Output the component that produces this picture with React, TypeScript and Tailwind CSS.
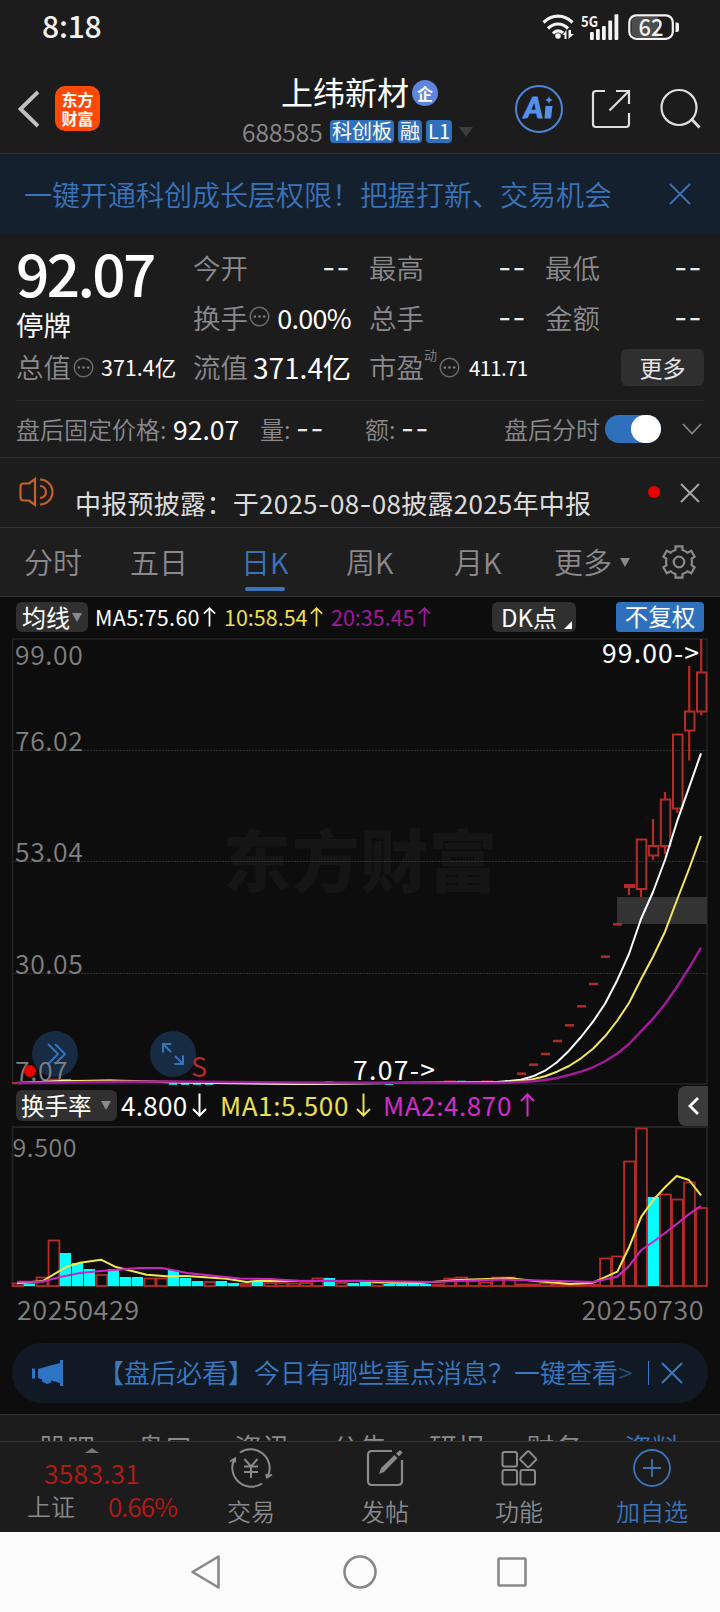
import React from 'react';
import clsx from 'clsx';

const RED = '#b32c27';
const CYAN = '#00ffff';

// Moving averages, newest value first, one value per 12px
const ma5 = [753.3, 787.7, 821.7, 860, 892, 919, 954, 980.7, 1003.7, 1021.7, 1037, 1050.7, 1062.3, 1070.7, 1076.3, 1079.7, 1081, 1082];
const ma10 = [836, 869, 900, 931.7, 956.7, 979.3, 1003, 1021, 1036.3, 1048.7, 1058.3, 1066, 1071.7, 1076.3, 1079.3, 1081, 1081.7, 1082.3];
const ma20 = [947.7, 968, 986.7, 1004, 1018.7, 1031.3, 1044, 1053.7, 1061.3, 1067.3, 1071.7, 1075, 1078, 1080, 1081.3, 1082, 1082.6, 1083];

const toPoints = (values: number[]) => values.map((y, i) => `${701 - i * 12},${y}`).join(' ');

// x, wick top, body top, body bottom, wick bottom
const candles = [
  [701.5, 639, 672.5, 711.5, 715.5],
  [689.5, 666, 711.5, 730.5, 760.5],
  [677.5, 734, 734.5, 808.5, 813],
  [665.3, 792, 799.5, 846, 854],
  [653.3, 819, 846, 855.5, 860],
  [641.3, 839, 839.5, 889, 897],
];

const limitUps = [924.3, 956.7, 984, 1006.3, 1025.3, 1041, 1054, 1064.7, 1073.7];

// top of every turnover bar; "c" marks a falling day
const volumes: [number, string?][] = [
  [1283.5], [1283.5, 'c'], [1277.5], [1240.5], [1253, 'c'], [1263, 'c'], [1269, 'c'], [1275], [1269, 'c'], [1277, 'c'],
  [1277, 'c'], [1278.5], [1278.5], [1270, 'c'], [1278, 'c'], [1281, 'c'], [1282], [1281, 'c'], [1283, 'c'], [1284],
  [1281.5, 'c'], [1283], [1283], [1283.5], [1283], [1278.5], [1278, 'c'], [1283], [1283, 'c'], [1281.5, 'c'],
  [1283], [1284, 'c'], [1284, 'c'], [1283.5, 'c'], [1284, 'c'], [1285], [1278.5], [1277.5], [1281], [1282.5],
  [1277.5], [1277.5], [1284.5], [1284.5], [1283.5], [1284], [1285], [1285], [1285], [1258.5],
  [1256.5], [1161.5], [1128.5], [1197, 'c'], [1194.5], [1199.5], [1182.5], [1208],
];

const Close: React.FC<{ size: number; color: string; width?: number }> = ({ size, color, width = 2 }) => (
  <svg width={size} height={size} viewBox={`0 0 ${size} ${size}`}>
    <path d={`M1 1 ${size - 1} ${size - 1}M${size - 1} 1 1 ${size - 1}`} stroke={color} strokeWidth={width} />
  </svg>
);

const Dots = () => (
  <svg width="21" height="21" viewBox="0 0 21 21" className="shrink-0">
    <circle cx="10.5" cy="10.5" r="9.3" fill="none" stroke="#6a6a6c" strokeWidth="1.5" />
    <g fill="#7d7d80">
      <circle cx="5.8" cy="10.5" r="1.3" />
      <circle cx="10.5" cy="10.5" r="1.3" />
      <circle cx="15.2" cy="10.5" r="1.3" />
    </g>
  </svg>
);

const Dash = () => <span className="font-['Inter'] text-[28px] font-normal tracking-[1.500px] text-[#e8e8e8]">--</span>;

const Arrow: React.FC<{ down?: boolean; small?: boolean }> = ({ down, small }) => (
  <svg width={small ? 13 : 15} height={small ? 20 : 24} viewBox="0 0 15 24" preserveAspectRatio="none" className={clsx('shrink-0', down && 'rotate-180')}>
    <path d="M7.5 23.5V1.5M1 8l6.500-6.500L14 8" fill="none" stroke="currentColor" strokeWidth="2" />
  </svg>
);

const Cell: React.FC<{ label: string; children: React.ReactNode }> = ({ label, children }) => (
  <div className="flex h-[50px] w-[158px] items-center justify-between text-[27.500px] text-[#8a8a8d]">
    <span className="font-[350]">{label}</span>
    {children}
  </div>
);

const StatusBar = () => (
  <div className="flex h-[60px] items-start pl-[42px] pt-[3px]">
    <span className="w-[499px] text-[30px] font-medium leading-[44px] tracking-[-0.200px] text-[#f2f2f2]">8:18</span>
    <svg width="140" height="30" viewBox="541 12 140 30" className="mt-[9px]">
      <g fill="none" stroke="#f2f2f2" strokeWidth="3.2">
        <path d="M543.500 22.500C552 14 564 14 572.500 22.500" />
        <path d="M548 28.500c6-6 14-6 20 0" />
        <path d="M553 33.500c3-3.500 7-3.500 10-.500" />
      </g>
      <circle cx="558" cy="36" r="2.800" fill="#f2f2f2" />
      <path d="M562.500 35 566.500 30v9h-2v-4zM568.500 30v9l5.500-5h-3v-4z" fill="#f2f2f2" />
      <text x="581" y="26.500" fontSize="15" fontWeight="700" fill="#f2f2f2" textLength="17" lengthAdjust="spacingAndGlyphs">5G</text>
      <g fill="#f2f2f2">
        <rect x="590" y="32" width="3.800" height="8" rx="1" />
        <rect x="596" y="29" width="3.800" height="11" rx="1" />
        <rect x="602" y="26" width="3.800" height="14" rx="1" />
        <rect x="608.300" y="20.500" width="3.800" height="19.500" rx="1" />
        <rect x="614.500" y="14.300" width="3.800" height="25.700" rx="1" />
      </g>
      <path d="M636 17h22v20h-22q-4.500 0-4.500-4.500v-11Q631.500 17 636 17z" fill="#4d4d4d" />
      <rect x="629.300" y="15.300" width="43.500" height="23.500" rx="7" fill="none" stroke="#f2f2f2" strokeWidth="2.200" />
      <path d="M675.500 22.500h1.500q2 0 2 2v5.500q0 2-2 2h-1.500z" fill="#f2f2f2" />
      <text x="638.500" y="35.500" fontSize="23.500" fontWeight="500" fill="#f2f2f2" textLength="25" lengthAdjust="spacingAndGlyphs">62</text>
    </svg>
  </div>
);

const Header = () => (
  <div className="flex h-[94px] border-b border-[#333] pt-[11px]">
    <svg width="21" height="38" viewBox="0 0 21 38" className="ml-[18px] mt-[19px]">
      <path d="M20 2 2.500 19 20 36" fill="none" stroke="#c0c0c0" strokeWidth="4" />
    </svg>
    <div className="ml-4 mt-[15px] grid h-[45px] w-[45px] content-center rounded-[10px] bg-[#ff4a06] text-center text-[16px] font-bold leading-[19px] text-white">
      <span>东方</span>
      <span>财富</span>
    </div>
    <div className="ml-[135px] w-[250px]">
      <div className="flex h-[40px] items-center pl-[46px]">
        <span className="text-[32px] leading-[40px] text-white">上纬新材</span>
        <span className="ml-[3px] mt-[4px] grid h-[26px] w-[26px] place-items-center rounded-full bg-[#5f85df] text-[16px] font-bold leading-none text-white">企</span>
      </div>
      <div className="mt-[9px] flex h-[23px] items-center text-[20px] leading-[22px] text-white">
        <span className="w-[95px] pl-[7px] text-[24.500px] font-[350] text-[#8a8a8d]">688585</span>
        <span className="mr-1 w-[64px] rounded bg-[#2f70bd] pb-px text-center">科创板</span>
        <span className="mr-1 w-6 rounded bg-[#2f70bd] pb-px text-center">融</span>
        <span className="w-[26px] rounded bg-[#2f70bd] pb-px text-center">L1</span>
        <svg width="14" height="10" viewBox="0 0 14 10" className="ml-[7px]"><path d="M0 0h14L7 10z" fill="#3d3d3d" /></svg>
      </div>
    </div>
    <svg width="188" height="50" viewBox="514 84 188 50" className="ml-[29px] mt-[13px]">
      <circle cx="539" cy="109" r="23" fill="none" stroke="#4a86d8" strokeWidth="2" />
      <text x="524" y="118" fontSize="28" fontWeight="900" fontStyle="italic" fill="#5590ea" stroke="#5590ea" strokeWidth="1" fontFamily="Lato, sans-serif" textLength="19" lengthAdjust="spacingAndGlyphs">A</text>
      <path d="M545.500 106h7l-1.500 12.500h-6.500z" fill="#5590ea" />
      <path d="M549 96c.700 2.600 1.200 3.100 4 4-2.800.900-3.300 1.400-4 4-.700-2.600-1.200-3.100-4-4 2.800-.900 3.300-1.400 4-4z" fill="#5590ea" />
      <g fill="none" stroke="#dedede" strokeWidth="2.200">
        <path d="M605 91h-9q-3 0-3 3v30q0 3 3 3h30q3 0 3-3v-11" />
        <path d="M616 91h13v13M629 91l-19.500 19.500" />
        <circle cx="679" cy="107.500" r="17.500" />
        <path d="m691 118.500 8.500 9" strokeWidth="2.800" />
      </g>
    </svg>
  </div>
);

const Banner = () => (
  <div className="flex h-[80px] items-center justify-between bg-[#14202e] pl-[24px] pr-[29px]">
    <span className="text-[28px] font-[350] text-[#3a73b8]">一键开通科创成长层权限！把握打新、交易机会</span>
    <Close size={22} color="#3a73b8" width={1.800} />
  </div>
);

const Quote = () => (
  <div className="mx-4 h-[167px] border-b border-[#2a2a2a] pt-[9px]">
    <div className="flex h-[100px]">
      <div className="w-[177px]">
        <div className="h-[59px] text-[58.500px] font-medium leading-[57px] tracking-[-2.600px] text-white">92.07</div>
        <div className="text-[27.500px] leading-[44px] text-white">停牌</div>
      </div>
      <div className="grid grid-cols-[176px_176px_158px] content-start">
        <Cell label="今开"><Dash /></Cell>
        <Cell label="最高"><Dash /></Cell>
        <Cell label="最低"><Dash /></Cell>
        <Cell label="换手">
          <span className="-mt-[3px] mr-auto pl-px"><Dots /></span>
          <span className="text-[27px] tracking-[-0.700px] text-white">0.00%</span>
        </Cell>
        <Cell label="总手"><Dash /></Cell>
        <Cell label="金额"><Dash /></Cell>
      </div>
    </div>
    <div className="flex h-[48px] items-center text-[27.500px] text-white">
      <span className="font-[350] text-[#8a8a8d]">总值</span>
      <span className="ml-[2px] w-[28px]"><Dots /></span>
      <span className="w-[92px] text-[21.500px]">371.4亿</span>
      <span className="font-[350] text-[#8a8a8d]">流值</span>
      <span className="ml-[5px] w-[116px] text-[28px]">371.4亿</span>
      <span className="font-[350] text-[#8a8a8d]">市盈</span>
      <span className="mb-[24px] text-[13px] font-[350] text-[#8a8a8d]">动</span>
      <span className="ml-[2px] w-[30px]"><Dots /></span>
      <span className="text-[20.500px] tracking-[-0.700px]">411.71</span>
      <button className="ml-auto h-[37px] w-[83px] rounded-md bg-[#2f2f2f] text-[23px] leading-[35px] text-[#e4e4e4]">更多</button>
    </div>
  </div>
);

const AfterHours = () => (
  <div className="flex h-[57px] items-center border-b border-[#2a2a2a] pl-4 text-[24px] font-[350] text-[#8a8a8d]">
    <span className="w-[157px]">盘后固定价格:</span>
    <span className="w-[87px] text-[26.500px] font-normal text-white">92.07</span>
    <span className="w-[36px]">量:</span>
    <span className="w-[69px]"><Dash /></span>
    <span className="w-[36px]">额:</span>
    <span className="w-[103px]"><Dash /></span>
    <span className="w-[101px]">盘后分时</span>
    <span className="flex h-7 w-[56px] justify-end rounded-full bg-[#2f70bd]">
      <span className="h-7 w-[30px] rounded-full bg-white" />
    </span>
    <svg width="20" height="12" viewBox="0 0 20 12" className="ml-[21px]">
      <path d="m1 1 9 9.500L19 1" fill="none" stroke="#8a8a8d" strokeWidth="1.600" />
    </svg>
  </div>
);

const News = () => (
  <div className="flex h-[70px] border-b border-[#333] pl-[19px]">
    <svg width="36" height="30" viewBox="0 0 36 30" className="mt-[19px]">
      <g fill="none" stroke="#c8602a" strokeWidth="2.200">
        <path d="M16 2v26l-6-4.500H4.500Q1.500 23.500 1.500 20V10Q1.500 6.500 4.500 6.500H10z" />
        <path d="M21 2.500a12.500 12.500 0 0 1 0 25M21 9a6 6 0 0 1 0 12" />
      </g>
    </svg>
    <span className="ml-[20px] w-[573px] pt-[27px] text-[26px] leading-[36px] tracking-[0.280px] text-[#dcdcdc]">中报预披露：于2025<span className="font-['Inter']">-</span>08<span className="font-['Inter']">-</span>08披露2025年中报</span>
    <span className="mt-[28px] h-3 w-3 rounded-full bg-[#ea0000]" />
    <span className="ml-5 mt-[25px]"><Close size={20} color="#a5a5a5" /></span>
  </div>
);

const periods: [string, string][] = [
  ['分时', 'w-[106px]'],
  ['五日', 'w-[111px]'],
  ['日K', 'w-[105px] text-[#3a73b8]'],
  ['周K', 'w-[108px]'],
  ['月K', 'w-[100px]'],
  ['更多', 'w-[64px]'],
];

const Tabs = () => (
  <div className="flex h-[69px] items-center border-b border-[#333] bg-[#1e1e1e] pl-[24px] text-[29px] font-[350] text-[#8a8a8d]">
    {periods.map(([name, cls]) => (
      <div key={name} className={clsx('relative h-[69px] leading-[67px]', cls)}>
        {name}
        {name === '日K' && <span className="absolute bottom-[6px] left-[4px] h-1 w-10 rounded-full bg-[#3c74ba]" />}
      </div>
    ))}
    <svg width="10" height="9" viewBox="0 0 10 9" className="ml-[2px]"><path d="M0 0h10L5 9z" fill="#8a8a8d" /></svg>
    <svg width="36" height="36" viewBox="-18 -18 36 36" className="ml-[31px]">
      <g fill="none" stroke="#8a8a8d" strokeWidth="2.200">
        <path d="M-3.500-15.700h7v3.700q3 .8 5 2.700l3.700-1.900 3.400 5.900-3 2.100q.7 3.200 0 6.400l3 2.100-3.400 5.900-3.700-1.900q-2 1.900-5 2.700v3.700h-7v-3.700q-3-.8-5-2.700l-3.700 1.900-3.400-5.900 3-2.100q-.7-3.200 0-6.400l-3-2.100 3.400-5.900 3.700 1.900q2-1.900 5-2.700z" />
        <circle r="5.300" />
      </g>
    </svg>
  </div>
);

const MaBar = () => (
  <div className="flex h-[41px] items-center pl-4 pb-[1px] text-[21.500px] leading-[30px] text-white">
    <span className="flex h-[30px] w-[72px] items-center rounded-md bg-[#303030] pl-[6px] text-[24px]">
      <span className="pb-[1px]">均线</span>
      <svg width="10" height="9" viewBox="0 0 10 9" className="ml-[2px]"><path d="M0 0h10L5 9z" fill="#8a8a8d" /></svg>
    </span>
    <span className="ml-[7px] flex w-[129px] items-center justify-between pr-[8px] tracking-[0.300px]">MA5:75.60<Arrow small /></span>
    <span className="flex w-[107px] items-center justify-between pr-[8px] text-[#ece04e]">10:58.54<Arrow small /></span>
    <span className="flex w-[100px] items-center justify-between text-[#a01a9c]">20:35.45<Arrow small /></span>
    <span className="ml-[61px] flex h-[30px] w-[84px] items-center rounded-md bg-[#303030] pl-[9px] text-[24px]">
      DK点
      <svg width="8" height="8" viewBox="0 0 8 8" className="ml-auto mr-[4px] mt-[15px]"><path d="M8 0v8H0z" fill="#fff" /></svg>
    </span>
    <span className="ml-10 h-[30px] w-[88px] rounded bg-[#2f70bd] text-center text-[23.500px] leading-[28px]">不复权</span>
  </div>
);

const KLine = () => (
  <svg width="720" height="447" viewBox="0 638 720 447" className="block">
    <text x="223" y="887" fontSize="68" fontWeight="900" fill="#151515" textLength="274">东方财富</text>
    <g stroke="#2f2f2f" strokeDasharray="2 1">
      <path d="M12 750.500h695M12 861.500h695M12 973.500h695" />
    </g>
    <path d="M12.500 1084V639H707v445z" fill="none" stroke="#242424" strokeWidth="1.500" />
    <rect x="617" y="897" width="90" height="27" fill="#333" />
    <circle cx="55" cy="1054" r="23" fill="#172b42" />
    <circle cx="173" cy="1054" r="23" fill="#172b42" />
    <g fill="none" stroke="#3474bb" strokeWidth="2">
      <path d="m48 1044 10 10-10 10M55 1044l10 10-10 10" />
      <path d="M171 1052l-8-8M163 1052.500V1044h8.500M175 1056l8 8M183 1055.500v8.500h-8.500" />
    </g>
    <g fontSize="26.500" fontWeight="350" fill="#808080" letterSpacing="0.6">
      <text x="15" y="665">99.00</text>
      <text x="15" y="751">76.02</text>
      <text x="15" y="862">53.04</text>
      <text x="15" y="974">30.05</text>
      <text x="15" y="1081">7.07</text>
    </g>
    <circle cx="30" cy="1071" r="6" fill="#ea0000" />
    <text x="191" y="1077" fontSize="27" fill={RED}>S</text>
    <g stroke={RED} strokeWidth="2" fill="none">
      {candles.map(([x, high, top, bottom, low]) => (
        <g key={x}>
          <path d={`M${x - 0.3} ${high}V${top}M${x - 0.3} ${bottom}V${low}`} strokeWidth="2.200" />
          <rect x={x - 4.500} y={top} width="9.500" height={bottom - top} />
        </g>
      ))}
      <path d="M624 886h11" strokeWidth="4" />
      <path d="M629 886v9" />
      {limitUps.map((y, i) => (
        <path key={y} d={`M${613 - i * 12} ${y}h9`} strokeWidth="2.500" />
      ))}
      <path d="M12 1083h12M48 1079.500h11M444 1081.500h12M481 1081.500h12" />
    </g>
    <path d="M61 1080h10M169 1084h8M181 1084h8M193 1084h8M205 1084h8M325 1082h8M385 1084h8M457 1081.500h9M505 1081h7" stroke={CYAN} strokeWidth="1.500" />
    <g fill="none" strokeWidth="2" strokeLinejoin="round">
      <polyline points={`${toPoints(ma5)} 300,1084 180,1082.500 110,1080.700 62,1081 17,1083`} stroke="#fff" />
      <polyline points={`${toPoints(ma10)} 300,1083.500 180,1082 110,1080.500 62,1081.500 17,1083`} stroke="#f3e760" />
      <polyline points={`${toPoints(ma20)} 300,1082.500 165,1081.500 100,1082 17,1083`} stroke="#a01a9c" strokeWidth="2.400" />
    </g>
    <g fontSize="26.500" fill="#fff">
      <text x="602" y="663" textLength="97">99.00-&gt;</text>
      <text x="353" y="1080" textLength="82">7.07-&gt;</text>
    </g>
  </svg>
);

const TurnoverBar = () => (
  <div className="flex h-[41px] items-center pl-4 text-[26px] leading-[36px] text-white">
    <span className="flex h-[31px] w-[101px] items-center rounded-md bg-[#303030] pl-[5px] text-[23.500px]">
      <span className="pb-[2px]">换手率</span>
      <svg width="10" height="9" viewBox="0 0 10 9" className="ml-[9px]"><path d="M0 0h10L5 9z" fill="#8a8a8d" /></svg>
    </span>
    <span className="ml-[4px] flex w-[86px] items-center justify-between pb-[2px] tracking-[0.300px]">4.800<Arrow down /></span>
    <span className="ml-[13px] flex w-[151px] items-center justify-between pb-[2px] tracking-[0.600px] text-[#ece04e]">MA1:5.500<Arrow down /></span>
    <span className="ml-[12px] flex w-[152px] items-center justify-between pb-[2px] tracking-[0.600px] text-[#d12bc9]">MA2:4.870<Arrow /></span>
    <span className="ml-auto mr-3 grid h-[40px] w-[30px] place-items-center rounded-l-lg bg-[#3b3b3b]">
      <svg width="11" height="18" viewBox="0 0 11 18"><path d="M10 1 2 9l8 8" fill="none" stroke="#fff" strokeWidth="2.800" /></svg>
    </span>
  </div>
);

const Turnover = () => (
  <svg width="720" height="164" viewBox="0 1126 720 164" className="block">
    <path d="M12.500 1286V1127H707v159" fill="none" stroke="#242424" strokeWidth="1.800" />
    <text x="12.500" y="1157" fontSize="25" fontWeight="350" fill="#808080" letterSpacing="0.6">9.500</text>
    {volumes.map(([top, kind], i) =>
      kind ? (
        <rect key={i} x={11.8 + i * 12} y={top} width="11.200" height={1286.200 - top} fill={CYAN} />
      ) : (
        <rect key={i} x={12.600 + i * 11.990} y={top} width="10.800" height={1286 - top} fill="none" stroke={RED} strokeWidth="1.800" />
      )
    )}
    <g fill="none" strokeWidth="2" strokeLinejoin="round">
      <polyline
        stroke="#f3e74a"
        points="17,1283.300 42.700,1281 66.700,1266.700 80,1262.700 101,1259.700 115,1266.700 146.700,1274.700 166.700,1276.300 186.700,1276 226.700,1278.700 246.700,1282 260,1280.700 320,1281 360,1281 390,1282.700 420,1283 457,1280 510,1278.300 533,1280.700 570,1284 593,1282.700 617.300,1271.700 629.300,1246.700 641.300,1216.700 653.300,1200 665,1187.300 676.700,1176 689,1180 701,1195.300"
      />
      <polyline
        stroke="#cc25c6"
        points="17,1281.700 42,1281.700 60,1277 80,1273 101,1271 140,1268 162,1268 187,1273 240,1278.500 270,1279 300,1281 360,1280.700 430,1282 500,1279.500 560,1281 593,1282 617,1276.700 629,1266 641,1250.300 653,1242 665,1233 677,1223.700 689,1214 701,1206"
      />
    </g>
  </svg>
);

const Promo = () => (
  <div className="mx-3 flex h-[60px] items-center rounded-full bg-[#111a24] pl-5 text-[26px] font-[350] text-[#3a78c0]">
    <svg width="31" height="27" viewBox="0 0 31 27">
      <path d="M0 8.500h3v10H0zM6 9l22-6V0h3v26h-3v-3l-9-2.500v2l-4 1.500-5-2.500v-2L6 18z" fill="#2f74c4" />
    </svg>
    <span className="ml-[35px] w-[550px] whitespace-nowrap pb-[3px]">【盘后必看】今日有哪些重点消息？一键查看<span className="opacity-50">&gt;</span></span>
    <span className="h-6 w-px bg-[#3a78c0]" />
    <span className="ml-[12px]"><Close size={22} color="#3a78c0" /></span>
  </div>
);

const sections = ['股吧', '盘口', '资讯', '公告', '研报', '财务', '资料'];

const BottomNav = () => (
  <div className="flex h-[91px] border-t border-[#333] text-[24px] font-[350] leading-[30px] text-[#8a8a8d]">
    <div className="w-[186px] pt-[6px]">
      <svg width="14" height="5" viewBox="0 0 14 5" className="ml-[85px]"><path d="M0 5 7 0l7 5z" fill="#77777a" /></svg>
      <div className="mt-[3px] pl-[44px] text-[26.500px] leading-[33px] tracking-[0.250px] text-[#b71a16]">3583.31</div>
      <div className="flex items-center pl-[27px] leading-[34px]">
        <span className="w-[81px]">上证</span>
        <span className="text-[26px] tracking-[-0.900px] text-[#b71a16]">0.66%</span>
      </div>
    </div>
    <div className="flex w-[130px] flex-col items-center pt-[5px]">
      <svg width="44" height="42" viewBox="-22 -21 44 42">
        <g fill="none" stroke="#8a8a8d" strokeWidth="2">
          <path d="M-11-15.500A19 19 0 0 1 17 8M21 6.500 16 9.500 15 6M11 15.500A19 19 0 0 1-17-8M-21-6.500l5-3v4" />
          <path d="M-6.500-9 0-1.500 6.500-9M0-1.500V10M-7-1.500H7M-7 4H7" />
        </g>
      </svg>
      <span className="mt-[7px]">交易</span>
    </div>
    <div className="flex w-[138px] flex-col items-center pt-[5px]">
      <svg width="38" height="42" viewBox="-19 -21 38 42">
        <path d="M7-17h-20q-4 0-4 4v26q0 4 4 4h26q4 0 4-4V-8" fill="none" stroke="#8a8a8d" strokeWidth="2.200" />
        <path d="m-6 6 2-6L9.500-13 12.500-10-1 4zM11-14.500l4-3.500 2.500 2.500-3.500 4z" fill="#8a8a8d" />
      </svg>
      <span className="mt-[7px]">发帖</span>
    </div>
    <div className="flex w-[130px] flex-col items-center pt-[5px]">
      <svg width="38" height="42" viewBox="-19 -21 38 42" fill="none" stroke="#8a8a8d" strokeWidth="2">
        <rect x="-16.500" y="-16" width="14.500" height="14.500" rx="2" />
        <rect x="-16.500" y="2" width="14.500" height="14.500" rx="2" />
        <rect x="1.500" y="2" width="14.500" height="14.500" rx="2" />
        <rect x="3.200" y="-14.800" width="12" height="12" rx="1.500" transform="rotate(45 9.200 -8.800)" />
      </svg>
      <span className="mt-[7px]">功能</span>
    </div>
    <div className="flex w-[136px] flex-col items-center pt-[5px] text-[#3a73b8]">
      <svg width="42" height="42" viewBox="-21 -21 42 42" fill="none" stroke="#3a73b8" strokeWidth="1.800">
        <circle r="18" />
        <path d="M-9 0H9M0-9V9" />
      </svg>
      <span className="mt-[7px]">加自选</span>
    </div>
  </div>
);

export default function App() {
  return (
    <div className="h-[1612px] w-[720px] overflow-hidden bg-[#1c1c1c] font-['Noto_Sans_CJK_SC',sans-serif]">
      <StatusBar />
      <Header />
      <Banner />
      <Quote />
      <AfterHours />
      <News />
      <Tabs />
      <div className="h-[817px] bg-[#0d0d0d]">
        <MaBar />
        <KLine />
        <TurnoverBar />
        <Turnover />
        <div className="flex h-[53px] justify-between pl-[17px] pr-[16px] text-[27px] font-[350] leading-[37px] tracking-[0.500px] text-[#808080]">
          <span>20250429</span>
          <span>20250730</span>
        </div>
        <Promo />
      </div>
      <div className="flex h-[27px] overflow-hidden border-t border-[#333] pl-[39px] pt-[18px] text-[28px] font-[350] leading-[28px] text-[#8a8a8d]">
        {sections.map((s) => (
          <span key={s} className={clsx('w-[97.500px] shrink-0', s === '资料' && 'text-[#3a73b8]')}>{s}</span>
        ))}
      </div>
      <BottomNav />
      <div className="flex h-[80px] items-center bg-[#fcfcfc] pl-[190px]">
        <svg width="340" height="36" viewBox="190 1554 340 36" fill="none" stroke="#888" strokeWidth="2.600" strokeLinejoin="round">
          <path d="M192.500 1572 218.500 1556.500v31z" />
          <circle cx="360" cy="1572" r="15.500" />
          <rect x="498.500" y="1558.500" width="27" height="27" rx="1" />
        </svg>
      </div>
    </div>
  );
}
